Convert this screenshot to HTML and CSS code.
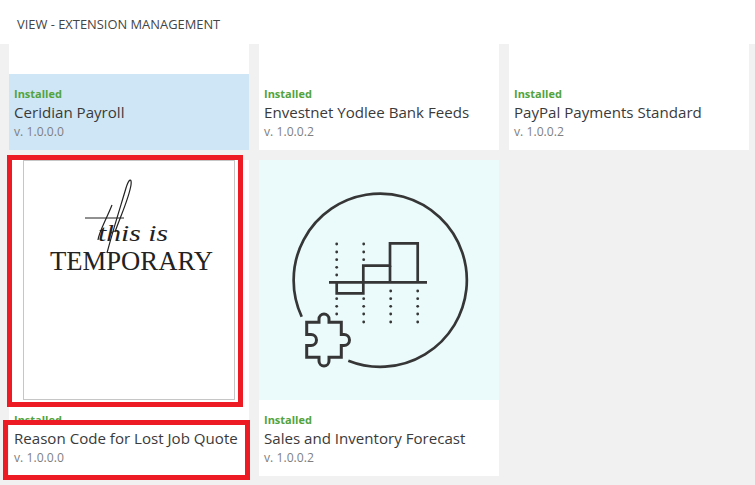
FILE: index.html
```html
<!DOCTYPE html>
<html lang="en">
<head>
    <meta charset="UTF-8">
    <meta name="viewport" content="width=device-width, initial-scale=1.0">
    <title>View - Extension Management</title>
    <link rel="stylesheet" href="styles.css">
</head>
<body>
    <header class="page-head">VIEW - EXTENSION MANAGEMENT</header>
    <main class="ext-grid">
        <div class="ext-card ext-card-selected">
            <div class="ext-thumb ext-thumb-cut"></div>
            <div class="ext-info ext-info-blue">
                <div class="ext-status">Installed</div>
                <div class="ext-name">Ceridian Payroll</div>
                <div class="ext-version">v. 1.0.0.0</div>
            </div>
        </div>
        <div class="ext-card">
            <div class="ext-thumb ext-thumb-cut"></div>
            <div class="ext-info">
                <div class="ext-status">Installed</div>
                <div class="ext-name">Envestnet Yodlee Bank Feeds</div>
                <div class="ext-version">v. 1.0.0.2</div>
            </div>
        </div>
        <div class="ext-card">
            <div class="ext-thumb ext-thumb-cut"></div>
            <div class="ext-info">
                <div class="ext-status">Installed</div>
                <div class="ext-name">PayPal Payments Standard</div>
                <div class="ext-version">v. 1.0.0.2</div>
            </div>
        </div>
        <div class="ext-card">
            <div class="ext-thumb">
                <svg class="ext-art" viewBox="0 0 240 240">
                    <rect x="14.5" y="0.5" width="211" height="239" fill="#fff" stroke="#c6c6c6"/>
                    <line x1="76" y1="58" x2="115" y2="58" stroke="#222" stroke-width="1"/>
                    <path class="temp-flourish" d="M98 93 C104 70 112 45 117 28 C120 18 123 18 122 25 C120 38 112 55 106 72"/>
                    <path class="temp-flourish" d="M89 80 C90 72 97 60 103 45"/>
                    <text class="temp-script" x="89" y="81" textLength="70" lengthAdjust="spacingAndGlyphs">this is</text>
                    <text class="temp-word" x="41" y="110" textLength="163" lengthAdjust="spacingAndGlyphs">TEMPORARY</text>
                </svg>
            </div>
            <div class="ext-info">
                <div class="ext-status">Installed</div>
                <div class="ext-name">Reason Code for Lost Job Quote</div>
                <div class="ext-version">v. 1.0.0.0</div>
            </div>
        </div>
        <div class="ext-card">
            <div class="ext-thumb ext-thumb-teal">
                <svg class="ext-art" viewBox="0 0 240 240">
                    <g class="icon-line">
                        <path d="M42.7 156.7 A86.6 86.6 0 1 1 89.3 200.7"/>
                        <path d="M70 122.3 H168"/>
                        <path d="M77.7 122.3 V133.3 H104.3 V105.7 H131 V83.3 H158.7 V122.3"/>
                        <path d="M131 105.7 V122.3"/>
                        <path class="icon-piece" d="M47.7 162.3 H60 V159 a5 5 0 0 1 10 0 V162.3 H82.3 V174.5 H85 a5.5 5.5 0 0 1 0 11 H82.3 V197.3 H70 V201 a5 5 0 0 1 -10 0 V197.3 H47.7 V185.5 H52 a5.5 5.5 0 0 0 0 -11 H47.7 Z"/>
                    </g>
                    <g class="icon-dots">
                        <circle cx="77.7" cy="84" r="1.4"/><circle cx="77.7" cy="92" r="1.4"/><circle cx="77.7" cy="99.7" r="1.4"/><circle cx="77.7" cy="107.3" r="1.4"/><circle cx="77.7" cy="115" r="1.4"/>
                        <circle cx="77.7" cy="138.7" r="1.4"/><circle cx="77.7" cy="146.3" r="1.4"/><circle cx="77.7" cy="154" r="1.4"/>
                        <circle cx="104.7" cy="84" r="1.4"/><circle cx="104.7" cy="92" r="1.4"/><circle cx="104.7" cy="99.7" r="1.4"/>
                        <circle cx="104.7" cy="138.7" r="1.4"/><circle cx="104.7" cy="146.3" r="1.4"/><circle cx="104.7" cy="154" r="1.4"/><circle cx="104.7" cy="162" r="1.4"/>
                        <circle cx="131.7" cy="131" r="1.4"/><circle cx="131.7" cy="138.7" r="1.4"/><circle cx="131.7" cy="146.3" r="1.4"/><circle cx="131.7" cy="154" r="1.4"/><circle cx="131.7" cy="162" r="1.4"/>
                        <circle cx="158.7" cy="131" r="1.4"/><circle cx="158.7" cy="138.7" r="1.4"/><circle cx="158.7" cy="146.3" r="1.4"/><circle cx="158.7" cy="154" r="1.4"/><circle cx="158.7" cy="162" r="1.4"/>
                    </g>
                </svg>
            </div>
            <div class="ext-info">
                <div class="ext-status">Installed</div>
                <div class="ext-name">Sales and Inventory Forecast</div>
                <div class="ext-version">v. 1.0.0.2</div>
            </div>
        </div>
    </main>
    <div class="mark mark-thumb"></div>
    <div class="mark mark-name"></div>
</body>
</html>
```

FILE: styles.css
```css
*{
    margin: 0;
    padding: 0;
    box-sizing: border-box;
}
body{
    position: relative;
    height: 485px;
    overflow: hidden;
    background-color: #f1f1f1;
    font-family: "Open Sans", "Noto Sans", sans-serif;
}
.page-head{
    height: 44px;
    padding: 16px 0 0 17px;
    background-color: #fff;
    color: #444;
    font-size: 12.9px;
    line-height: 16px;
}
.ext-grid{
    display: grid;
    grid-template-columns: repeat(3, 240px);
    gap: 10px;
    padding-left: 9px;
}
.ext-card{
    background-color: #fff;
}
.ext-thumb{
    height: 240px;
}
.ext-thumb-cut{
    height: 30px;
}
.ext-thumb-teal{
    background-color: #ebfbfb;
}
.ext-art{
    display: block;
    width: 240px;
    height: 240px;
}
.ext-info{
    height: 76px;
    padding: 12px 5px 0;
}
.ext-info-blue{
    background-color: #cfe6f7;
}
.ext-status{
    color: #54a33a;
    font-size: 11px;
    font-weight: 700;
    line-height: 15px;
}
.ext-name{
    color: #3a3a3a;
    font-size: 15.1px;
    line-height: 22px;
    white-space: nowrap;
}
.ext-version{
    color: #7f7f7f;
    font-size: 12.2px;
    line-height: 17px;
}
.temp-script{
    font-family: "Liberation Serif", serif;
    font-style: italic;
    font-size: 24px;
    fill: #222;
}
.temp-word{
    font-family: "Liberation Serif", serif;
    font-size: 27px;
    fill: #222;
}
.temp-flourish{
    fill: none;
    stroke: #222;
    stroke-width: 1.2;
}
.icon-line{
    fill: none;
    stroke: #363636;
    stroke-width: 2.7;
}
.icon-piece{
    stroke-width: 3;
}
.icon-dots{
    fill: #363636;
}
.mark{
    position: absolute;
    border: 5px solid #ed1c24;
}
.mark-thumb{
    left: 7px;
    top: 155px;
    width: 236px;
    height: 252px;
}
.mark-name{
    left: 3px;
    top: 420px;
    width: 247px;
    height: 60px;
}
```
